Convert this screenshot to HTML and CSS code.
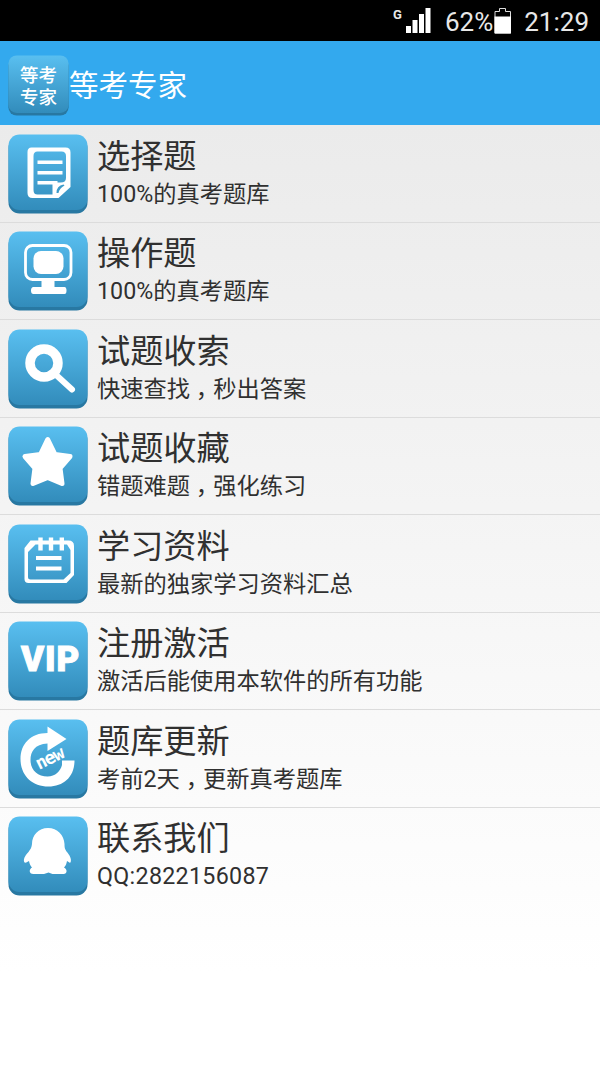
FILE: index.html
```
<!DOCTYPE html>
<html lang="zh-CN">
<head>
<meta charset="utf-8">
<title>等考专家</title>
<link rel="stylesheet" href="styles.css">
</head>
<body>
<svg class="defs" aria-hidden="true">
  <defs>
    <linearGradient id="tileFill" x1="0" y1="0" x2="0" y2="1">
      <stop offset="0" stop-color="#59bff0"/>
      <stop offset="1" stop-color="#328cbb"/>
    </linearGradient>
    <symbol id="tile" viewBox="0 0 80 80">
      <rect x="0.5" y="3" width="79" height="76.5" rx="11" fill="#2878a2"/>
      <rect x="0.5" y="0.5" width="79" height="75.5" rx="11" fill="url(#tileFill)"/>
    </symbol>
  </defs>
</svg>
<div class="status">
  <svg class="signal" viewBox="0 0 40 36">
    <text class="net" x="0" y="19">G</text>
    <path fill="#fff" d="M13 26h5v7h-5zM19.500 20h5v13h-5zM26 14h5v19h-5zM32.500 8h5v25h-5z"/>
  </svg>
  <span class="percent">62%</span>
  <svg class="battery" viewBox="0 0 18 36">
    <path d="M1 33V11.500h4.500v-3h6v3h5V33z" fill="#000" stroke="#ddd" stroke-width="1"/>
    <path d="M.5 16.500h16.500v17H.5z" fill="#fff"/>
  </svg>
  <span class="clock">21:29</span>
</div>
<header class="bar">
  <div class="logo">
    <svg viewBox="0 0 80 80"><use href="#tile"/></svg>
    <div class="logo-text">等考<br>专家</div>
  </div>
  <h1>等考专家</h1>
</header>
<main class="list">
  <div class="row">
    <svg class="icon" viewBox="8.500 9 80 80"><use href="#tile" x="8.500" y="9" width="80" height="80"/>
      <path fill="#fff" fill-rule="evenodd" d="M32 22.500H66Q71 22.500 71 27.500V62L59 73H33Q28 73 28 68V27Q28 22.500 32 22.500zM38 26.500Q34 26.500 34 31V65Q34 69.500 38 69.500H53V57.500H61Q66.500 57.500 66.500 53V31Q66.500 26.500 62 26.500z"/>
      <path fill="#fff" d="M38 35.500h25v3.500H38zM38 46h25v3.500H38zM38 56h20v3.500H38z"/>
      <path fill="#3c9bca" d="M57 68Q57 60.500 64 59.500L65 60.500Q60 63 59 68z"/>
    </svg>
    <div class="copy"><h2>选择题</h2><p>100%的真考题库</p></div>
  </div>
  <div class="row">
    <svg class="icon" viewBox="8.500 9 80 80"><use href="#tile" x="8.500" y="9" width="80" height="80"/>
      <rect x="26" y="23.500" width="45.500" height="34" rx="7" fill="none" stroke="#fff" stroke-width="2.800"/>
      <rect x="34" y="29" width="30" height="23" rx="7.500" fill="#fff"/>
      <path fill="#fff" d="M42 58h13v7h10q2 0 2 3.500t-2 3.500H34q-2.500 0-2.500-3.500t2.500-3.500h8z"/>
    </svg>
    <div class="copy"><h2>操作题</h2><p>100%的真考题库</p></div>
  </div>
  <div class="row">
    <svg class="icon" viewBox="8.500 9 80 80"><use href="#tile" x="8.500" y="9" width="80" height="80"/>
      <circle cx="44.500" cy="43" r="14" fill="none" stroke="#fff" stroke-width="9.500"/>
      <path d="M55 53.500L72.500 69.500" stroke="#fff" stroke-width="6" stroke-linecap="round"/>
    </svg>
    <div class="copy"><h2>试题收索</h2><p>快速查找<span class="comma">，</span>秒出答案</p></div>
  </div>
  <div class="row">
    <svg class="icon" viewBox="8.500 9 80 80"><use href="#tile" x="8.500" y="9" width="80" height="80"/>
      <path fill="#fff" stroke="#fff" stroke-width="5" stroke-linejoin="round" d="M48.200 22.500L55.500 37.500L70.500 39.500L60.500 51L62.500 66.500L48.200 60.500L33.500 66.500L35.500 51L25.500 39.500L41 37.500z"/>
    </svg>
    <div class="copy"><h2>试题收藏</h2><p>错题难题<span class="comma">，</span>强化练习</p></div>
  </div>
  <div class="row">
    <svg class="icon" viewBox="8.500 9 80 80"><use href="#tile" x="8.500" y="9" width="80" height="80"/>
      <path fill="#fff" fill-rule="evenodd" d="M31 25.500H69Q74.500 25.500 74.500 31V60L67 68H29Q25 68 25 64V33zM36 29.500L28.500 37V62Q28.500 64.500 31 64.500H64L71 58V35L67.500 29.500z"/>
      <path stroke="#fff" stroke-width="4.400" d="M41 22.500V35.500M51.500 22.500V35.500M62.300 22.500V35.500"/>
      <path fill="#fff" d="M36.500 41h25.500v4H36.500zM36.500 51.500h25.500v4H36.500z"/>
    </svg>
    <div class="copy"><h2>学习资料</h2><p>最新的独家学习资料汇总</p></div>
  </div>
  <div class="row">
    <svg class="icon" viewBox="8.500 9 80 80"><use href="#tile" x="8.500" y="9" width="80" height="80"/>
      <text class="vip" x="21.500 45.500 57" y="58.500">VIP</text>
    </svg>
    <div class="copy"><h2>注册激活</h2><p>激活后能使用本软件的所有功能</p></div>
  </div>
  <div class="row">
    <svg class="icon" viewBox="8.500 9 80 80"><use href="#tile" x="8.500" y="9" width="80" height="80"/>
      <path fill="#fff" d="M48 16.500L67 29L48 41V33.500C35 34 31 42 31 50C31 60 38 66.500 48 66.500C56 66.500 61 61 62.500 55V50.500H75C75 67 64 76.500 49 76.500C32 76.500 21 65 21 49C21 34 31 23 48 23z"/>
      <text class="new" transform="translate(39.500 60) rotate(-26)" textLength="30">new</text>
    </svg>
    <div class="copy"><h2>题库更新</h2><p>考前2天<span class="comma">，</span>更新真考题库</p></div>
  </div>
  <div class="row">
    <svg class="icon" viewBox="8.500 9 80 80"><use href="#tile" x="8.500" y="9" width="80" height="80"/>
      <path fill="#fff" d="M48.500 21C39 21 32.500 28 32.500 37C32 41 31 42 29 45C25 49 23.500 53 25 55.500C26.500 56 28 55 29.500 54C30 57 31 59 32.500 60.500C29.500 62 29 67 34 67H44.500L49 65.500L53 67H64C68 67 68 62 64.500 60.500C66.500 58.500 67 56.500 67.500 54C69 55 70 56 71 55.500C72.500 52 70 48 67 44.500C65.500 42 65 41 65 37C64.500 28 58 21 48.500 21z"/>
    </svg>
    <div class="copy"><h2>联系我们</h2><p class="contact">QQ:2822156087</p></div>
  </div>
</main>
</body>
</html>
```
FILE: styles.css
```
* { box-sizing: border-box; }
body {
  margin: 0;
  height: 1067px;
  display: flex;
  flex-direction: column;
  overflow: hidden;
  font-family: Roboto, "Noto Sans CJK SC", sans-serif;
  color: #303030;
}
h1, h2, p { margin: 0; font-weight: 400; white-space: nowrap; }
.defs { position: absolute; width: 0; height: 0; }
.status {
  height: 41px;
  flex: none;
  display: flex;
  justify-content: flex-end;
  padding-right: 11px;
  background: #000;
  color: #e8e8e8;
  font-size: 26px;
  line-height: 44px;
}
.signal { width: 40px; height: 36px; margin-right: 12px; }
.net { font: 700 13px Roboto, sans-serif; fill: #e8e8e8; }
.battery { width: 18px; height: 36px; margin: 0 12px 0 1px; }
.bar {
  height: 84px;
  flex: none;
  display: flex;
  align-items: center;
  padding: 4px 8px 0;
  background: #33a9ee;
  color: #fff;
}
.logo { display: grid; width: 61px; height: 61px; }
.logo > * { grid-area: 1 / 1; }
.logo svg { width: 61px; height: 61px; }
.logo-text {
  z-index: 1;
  padding-top: 10px;
  text-align: center;
  font-size: 18.500px;
  font-weight: 500;
  line-height: 22px;
}
.bar h1 { font-size: 29.500px; line-height: 40px; padding-top: 1px; }
.list {
  flex: 1;
  background: linear-gradient(#ebebeb, #fff 90%);
}
.row {
  height: 97.500px;
  display: flex;
  gap: 9px;
  padding: 8.500px 8px 0;
  border-bottom: 1px solid #dcdcdc;
}
.row:last-child { border-bottom: 0; }
.icon { width: 80px; height: 80px; flex: none; }
.copy h2 { font-size: 33.200px; line-height: 44px; padding-top: 1px; }
.copy p { font-size: 23.250px; line-height: 32px; margin-top: -1px; }
.copy .contact { letter-spacing: 0.300px; }
.comma { font-feature-settings: "halt"; padding: 0 5.800px; }
.vip { font: 900 35px Roboto, sans-serif; fill: #fff; stroke: #fff; stroke-width: 1px; }
.new { font: 700 18px "DejaVu Sans Mono", monospace; fill: #fff; }
```
